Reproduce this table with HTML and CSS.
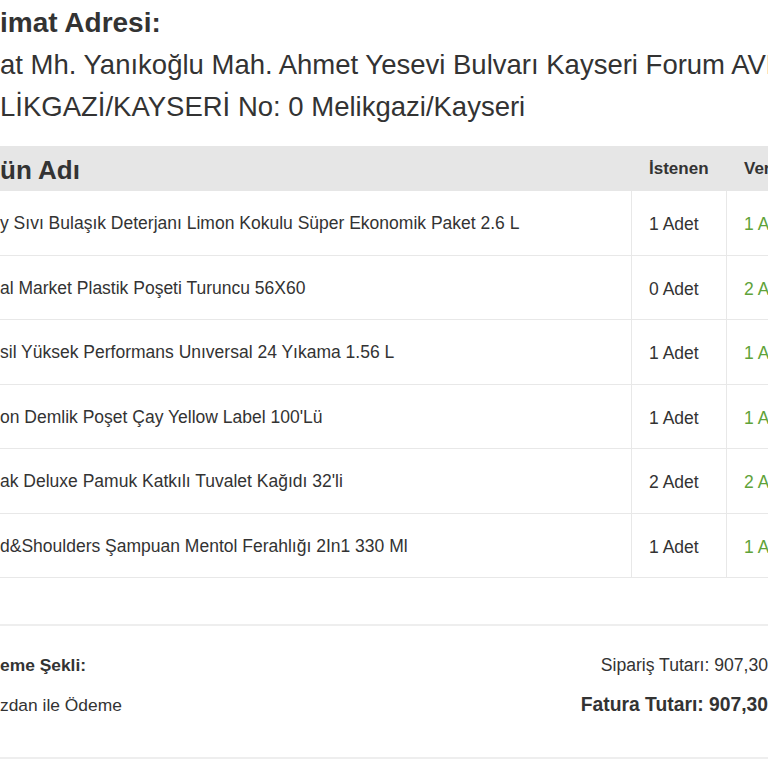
FILE: index.html
```html
<!DOCTYPE html>
<html lang="tr">
<head>
<meta charset="utf-8">
<title>Sipariş Detayı</title>
<link rel="stylesheet" href="styles.css">
</head>
<body>
<div class="page">
  <section class="address">
    <h2 class="address-title">imat Adresi:</h2>
    <p class="address-text">
      <span class="address-line">at Mh. Yanıkoğlu Mah. Ahmet Yesevi Bulvarı Kayseri Forum AVM</span>
      <span class="address-line">LİKGAZİ/KAYSERİ No: 0 Melikgazi/Kayseri</span>
    </p>
  </section>

  <div class="items">
    <div class="row head">
      <div class="cell name">ün Adı</div>
      <div class="cell qty">İstenen</div>
      <div class="cell given">Verilen</div>
    </div>
    <div class="row">
      <div class="cell name">y Sıvı Bulaşık Deterjanı Limon Kokulu Süper Ekonomik Paket 2.6 L</div>
      <div class="cell qty">1 Adet</div>
      <div class="cell given">1 Adet</div>
    </div>
    <div class="row">
      <div class="cell name">al Market Plastik Poşeti Turuncu 56X60</div>
      <div class="cell qty">0 Adet</div>
      <div class="cell given">2 Adet</div>
    </div>
    <div class="row">
      <div class="cell name">sil Yüksek Performans Unıversal 24 Yıkama 1.56 L</div>
      <div class="cell qty">1 Adet</div>
      <div class="cell given">1 Adet</div>
    </div>
    <div class="row">
      <div class="cell name">on Demlik Poşet Çay Yellow Label 100'Lü</div>
      <div class="cell qty">1 Adet</div>
      <div class="cell given">1 Adet</div>
    </div>
    <div class="row">
      <div class="cell name">ak Deluxe Pamuk Katkılı Tuvalet Kağıdı 32'li</div>
      <div class="cell qty">2 Adet</div>
      <div class="cell given">2 Adet</div>
    </div>
    <div class="row">
      <div class="cell name">d&amp;Shoulders Şampuan Mentol Ferahlığı 2In1 330 Ml</div>
      <div class="cell qty">1 Adet</div>
      <div class="cell given">1 Adet</div>
    </div>
  </div>

  <section class="summary">
    <div class="pay">
      <div class="line label">eme Şekli:</div>
      <div class="line">zdan ile Ödeme</div>
    </div>
    <div class="totals">
      <div class="line">Sipariş Tutarı: 907,30</div>
      <div class="line total">Fatura Tutarı: 907,30</div>
    </div>
  </section>
</div>
</body>
</html>
```

FILE: styles.css
```css
html, body {
  margin: 0;
  padding: 0;
  overflow: hidden;
  background: #ffffff;
}

body {
  font-family: "Liberation Sans", Arial, sans-serif;
  color: #333333;
}

.page {
  width: 768px;
}

.address {
  padding-top: 6px;
}

.address-title {
  margin: 0;
  font-size: 28px;
  font-weight: bold;
  line-height: 34px;
  white-space: nowrap;
}

.address-text {
  margin: 4px 0 0;
  font-size: 27.5px;
  line-height: 42px;
}

.address-line {
  display: block;
  white-space: nowrap;
}

.items {
  margin-top: 18px;
}

.row {
  display: grid;
  grid-template-columns: 631px 95px 1fr;
  border-bottom: 1px solid #e8e8e8;
  height: 63.5px;
  font-size: 17.5px;
  line-height: 20px;
}

.row.head {
  background: #e6e6e6;
  border-bottom: none;
  height: 45px;
  font-weight: bold;
  font-size: 17px;
}

.cell {
  display: flex;
  align-items: center;
  white-space: nowrap;
  overflow: visible;
  padding-top: 3px;
}

.name {
  padding-top: 1px;
}

.head .name {
  font-size: 26px;
  padding-top: 2px;
}

.qty {
  padding-left: 17px;
  border-left: 1px solid #e8e8e8;
}

.given {
  padding-left: 17px;
  border-left: 1px solid #e8e8e8;
  color: #5fa33a;
}

.head .qty,
.head .given {
  border-left: 1px solid transparent;
  color: #333333;
  padding-top: 1px;
}

.summary {
  margin-top: 46px;
  border-top: 2px solid #eeeeee;
  border-bottom: 2px solid #eeeeee;
  padding: 19px 0 32px;
  display: flex;
  justify-content: space-between;
  font-size: 17.4px;
}

.line {
  line-height: 40px;
  white-space: nowrap;
}

.label {
  font-weight: bold;
}

.totals {
  text-align: right;
  font-size: 17.6px;
}

.total {
  font-size: 19.3px;
  font-weight: bold;
}
```
